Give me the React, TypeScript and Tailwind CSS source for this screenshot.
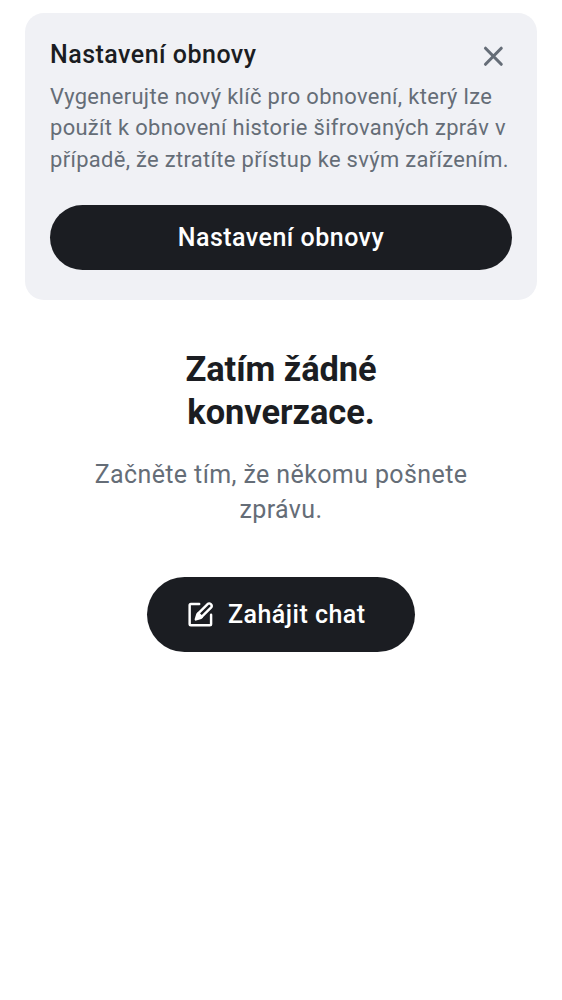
export default function App() {
  return (
    <main className="min-h-screen bg-white px-[25px] pt-[12.5px] font-['Roboto',sans-serif] text-[#1b1d22]">
      <section className="h-[287.5px] rounded-[19px] bg-[#f0f1f5] px-[25px] pt-[25px]">
        <div className="flex h-[37px] items-start justify-between">
          <h2 className="whitespace-nowrap text-[25px] leading-[34px] font-medium tracking-[0.48px]">Nastavení obnovy</h2>
          <button aria-label="Zavřít" className="mt-[3px] mr-[3px] h-[31px] w-[31px] text-[#656d77]">
            <svg viewBox="0 0 24 24" width="31" height="31" fill="none" stroke="currentColor" strokeWidth="2.4" strokeLinecap="round">
              <path d="m5.8 5.6 12.2 12.4M18 5.6 5.8 18" />
            </svg>
          </button>
        </div>
        <p className="mt-[6.5px] text-[21.9px] leading-[31.25px] tracking-[0.34px] whitespace-nowrap text-[#656d77]">
          Vygenerujte nový klíč pro obnovení, který lze<br />použít k obnovení historie šifrovaných zpráv v<br />případě, že ztratíte přístup ke svým zařízením.
        </p>
        <button className="mt-[30.25px] flex h-[65px] w-full items-center justify-center rounded-full bg-[#1b1d22] text-[25px] font-medium tracking-[0.48px] text-white">
          Nastavení obnovy
        </button>
      </section>
      <section className="flex flex-col items-center text-center">
        <h1 className="mt-[47.8px] text-[34.4px] leading-[42.8px] font-bold tracking-[-0.05px]">Zatím žádné<br />konverzace.</h1>
        <p className="mt-[25px] text-[25px] leading-[34.8px] tracking-[0.39px] text-[#656d77]">Začněte tím, že někomu pošnete<br />zprávu.</p>
        <button className="mt-[48.8px] flex h-[75px] w-[268px] items-center rounded-full bg-[#1b1d22] pl-[37.8px] text-[25px] font-medium tracking-[0.48px] text-white">
          <svg viewBox="0 0 24 24" width="31" height="31" fill="none" stroke="currentColor" strokeWidth="1.9" strokeLinecap="round" strokeLinejoin="round">
            <path d="M11 3.8H4.6a1 1 0 0 0-1 1v14.6a1 1 0 0 0 1 1h14.6a1 1 0 0 0 1-1V12.2" />
            <path d="m9.9 11.6 7.8-7.8a1.4 1.4 0 0 1 2 0l.6.6a1.4 1.4 0 0 1 0 2l-7.8 7.8" />
            <path d="m10.3 11.2 2.7 2.7-1.2.9-3.4 1 1-3.4Z" fill="currentColor" />
          </svg>
          <span className="ml-[12.2px] whitespace-nowrap">Zahájit chat</span>
        </button>
      </section>
    </main>
  )
}
